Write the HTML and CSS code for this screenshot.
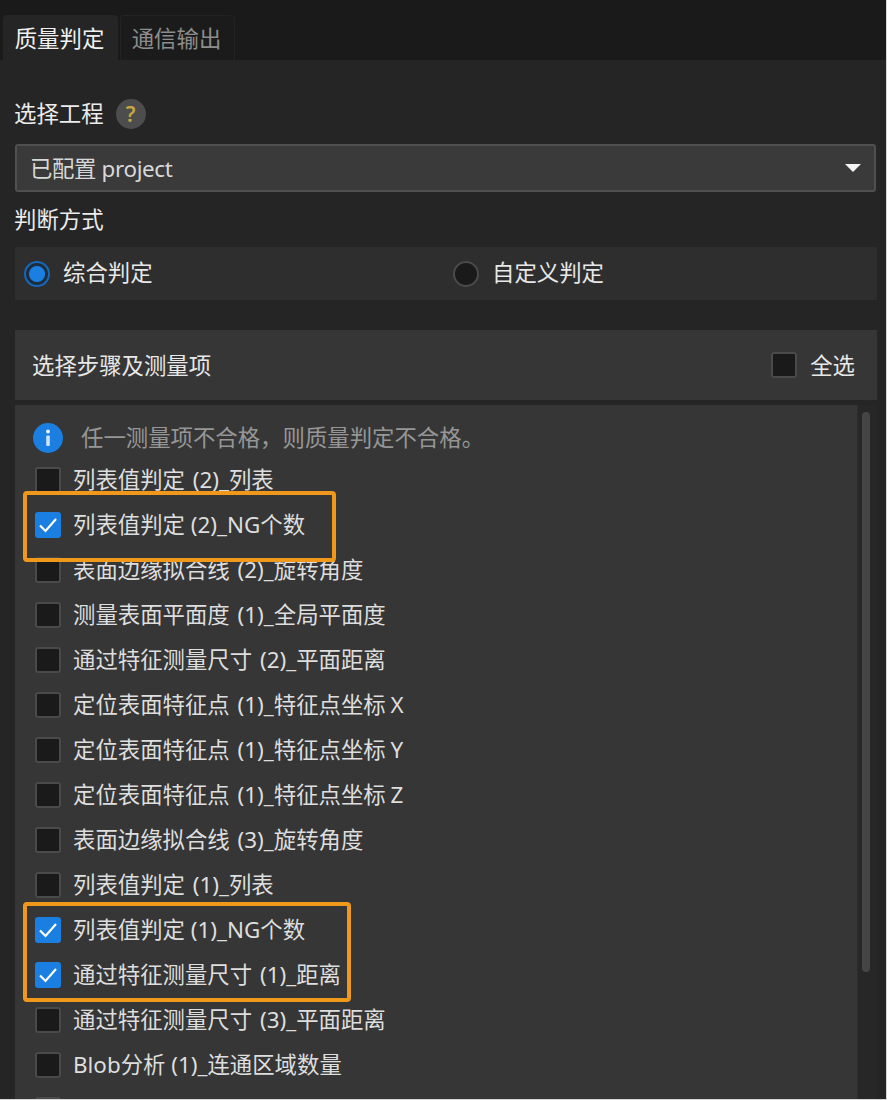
FILE: index.html
```html
<!DOCTYPE html>
<html lang="zh">
<head>
<meta charset="utf-8">
<title>质量判定</title>
<link rel="stylesheet" href="styles.css">
</head>
<body>
<div class="frame">
  <div class="tabbar">
    <div class="tab tab-active">质量判定</div>
    <div class="tab">通信输出</div>
  </div>
  <div class="panel">
    <div class="label-row">
      <span class="label">选择工程</span>
      <span class="help">?</span>
    </div>
    <div class="select">
      <span class="lift select-value">已配置 project</span>
      <span class="caret"></span>
    </div>
    <div class="label method">判断方式</div>
    <div class="radios">
      <div class="radio-item">
        <span class="radio radio-on"></span><span class="radio-text">综合判定</span>
      </div>
      <div class="radio-item">
        <span class="radio"></span><span class="radio-text">自定义判定</span>
      </div>
    </div>
    <div class="header">
      <span class="lift">选择步骤及测量项</span>
      <div class="select-all"><span class="check"></span><span class="lift">全选</span></div>
    </div>
    <div class="list">
      <div class="rows">
        <div class="info">
          <svg class="info-icon" viewBox="0 0 30 30"><circle cx="15" cy="15" r="15" fill="#1a7fe0"/><circle cx="15" cy="8.5" r="2" fill="#e8f2fc"/><rect x="13.2" y="12.5" width="3.6" height="10.5" rx="1" fill="#cfe3f8"/></svg>
          <span>任一测量项不合格，则质量判定不合格。</span>
        </div>
        <div class="row"><span class="check"></span><span>列表值判定 (2)_列表</span></div>
        <div class="row row-tight"><span class="check check-on"><svg viewBox="0 0 26 26"><path d="M5 13.5 L10.5 19 L21 7" fill="none" stroke="#fff" stroke-width="2.2"/></svg></span><span>列表值判定 (2)_NG个数</span></div>
        <div class="row"><span class="check"></span><span>表面边缘拟合线 (2)_旋转角度</span></div>
        <div class="row"><span class="check"></span><span>测量表面平面度 (1)_全局平面度</span></div>
        <div class="row"><span class="check"></span><span>通过特征测量尺寸 (2)_平面距离</span></div>
        <div class="row"><span class="check"></span><span>定位表面特征点 (1)_特征点坐标<span class="tail"> X</span></span></div>
        <div class="row"><span class="check"></span><span>定位表面特征点 (1)_特征点坐标<span class="tail"> Y</span></span></div>
        <div class="row"><span class="check"></span><span>定位表面特征点 (1)_特征点坐标<span class="tail"> Z</span></span></div>
        <div class="row"><span class="check"></span><span>表面边缘拟合线 (3)_旋转角度</span></div>
        <div class="row"><span class="check"></span><span>列表值判定 (1)_列表</span></div>
        <div class="row row-tight"><span class="check check-on"><svg viewBox="0 0 26 26"><path d="M5 13.5 L10.5 19 L21 7" fill="none" stroke="#fff" stroke-width="2.2"/></svg></span><span>列表值判定 (1)_NG个数</span></div>
        <div class="row"><span class="check check-on"><svg viewBox="0 0 26 26"><path d="M5 13.5 L10.5 19 L21 7" fill="none" stroke="#fff" stroke-width="2.2"/></svg></span><span>通过特征测量尺寸 (1)_距离</span></div>
        <div class="row"><span class="check"></span><span>通过特征测量尺寸 (3)_平面距离</span></div>
        <div class="row row-tight"><span class="check"></span><span>Blob分析 (1)_连通区域数量</span></div>
        <div class="row"><span class="check"></span><span></span></div>
      </div>
      <div class="scrollbar"><div class="thumb"></div></div>
      <div class="mark mark-one"></div>
      <div class="mark mark-two"></div>
    </div>
  </div>
</div>
</body>
</html>
```

FILE: styles.css
```css
* { box-sizing: border-box; }
html, body { margin: 0; padding: 0; height: 1100px; overflow: hidden; background: #d8d8d8; }
body {
  font-family: "Noto Sans", "Noto Sans CJK SC", sans-serif;
  font-size: 22.4px;
  color: #e8e8e8;
}
.frame { width: 886px; height: 1099px; overflow: hidden; background: #252525; display: flex; flex-direction: column; }
.lift { padding-bottom: 2px; }

.tabbar { height: 60px; flex: none; background: #1a1a1a; display: flex; gap: 2px; padding: 15px 0 0 3px; }
.tab {
  width: 115px; height: 45px; display: flex; align-items: center; justify-content: center;
  padding: 0 2px 2px 0;
  border-radius: 4px 4px 0 0; color: #8d8d8d; background: #1b1b1b;
  border: 1px solid #232323; border-bottom: 0;
}
.tab-active { background: #252525; color: #f0f0f0; border-color: #252525; }

.panel { flex: 1; padding: 0 10px 0 15px; min-height: 0; display: flex; flex-direction: column; }
.label { line-height: 30px; color: #ececec; }
.label-row { display: flex; align-items: center; gap: 12px; margin: 39px 0 0 -1px; height: 30px; }
.help {
  width: 30px; height: 30px; border-radius: 50%; background: #4d4d4d; color: #c9a63e;
  display: flex; align-items: center; justify-content: center; font-size: 21px; font-weight: 600;
}
.select {
  height: 48px; margin-top: 15px; padding: 0 13px; width: 861px; flex: none;
  background: #3a3a3a; border: 2px solid #505050; border-radius: 3px;
  display: flex; align-items: center; justify-content: space-between; color: #d8d8d8;
}
.select-value { letter-spacing: -0.35px; }
.caret { width: 0; height: 0; border-left: 8px solid transparent; border-right: 8px solid transparent; border-top: 8px solid #f4f4f4; }
.method { margin: 13px 0 0 -1px; height: 30px; flex: none; }
.radios { height: 53px; width: 862px; flex: none; margin-top: 12px; background: #2e2e2e; display: flex; align-items: center; padding-left: 9px; }
.radio-item { width: 429px; flex: none; display: flex; align-items: center; gap: 13px; }
.radio-text { margin-top: -4px; }
.radio { width: 26px; height: 26px; border-radius: 50%; background: #1a1a1a; border: 2px solid #4a4a4a; flex: none; }
.radio-on { border: 2px solid #1668b8; background: radial-gradient(circle, #1a7fe0 0 7.5px, #1d2d3d 8.5px); }

.header {
  height: 70px; width: 862px; flex: none; margin-top: 30px; background: #363636;
  display: flex; align-items: center; justify-content: space-between; padding: 0 22px 0 17px;
}
.select-all { display: flex; align-items: center; gap: 13px; }

.list { position: relative; width: 862px; flex: 1; min-height: 0; margin-top: 5px; background: #363636; display: flex; overflow: hidden; }
.rows { flex: 1; min-width: 0; padding: 18px 0 0 20px; }
.info { height: 35px; display: flex; align-items: flex-start; gap: 18px; color: #969696; line-height: 30px; }
.info-icon { width: 30px; height: 30px; margin-left: -2px; flex: none; }
.row { height: 45px; padding-top: 9px; display: flex; align-items: flex-start; gap: 12px; line-height: 26px; color: #dedede; word-spacing: 2px; }
.row-tight { word-spacing: 0; }
.tail { word-spacing: -1px; }
.check {
  width: 26px; height: 26px; flex: none; display: block; background: #1a1a1a;
  border: 2px solid #4a4a4a; border-radius: 3px;
}
.check-on { background: #1a7fe0; border: 0; }
.check-on svg { display: block; width: 26px; height: 26px; }

.scrollbar { width: 20px; flex: none; background: #272727; border-left: 1px solid #2c2c2c; padding: 7px 0 0 4px; }
.thumb { width: 8px; height: 560px; border-radius: 4px; background: #454545; }

.mark { position: absolute; border: 4px solid #f0981c; border-radius: 4px; }
.mark-one { left: 8px; top: 86px; width: 313px; height: 71px; }
.mark-two { left: 8px; top: 497px; width: 328px; height: 100px; }
```
